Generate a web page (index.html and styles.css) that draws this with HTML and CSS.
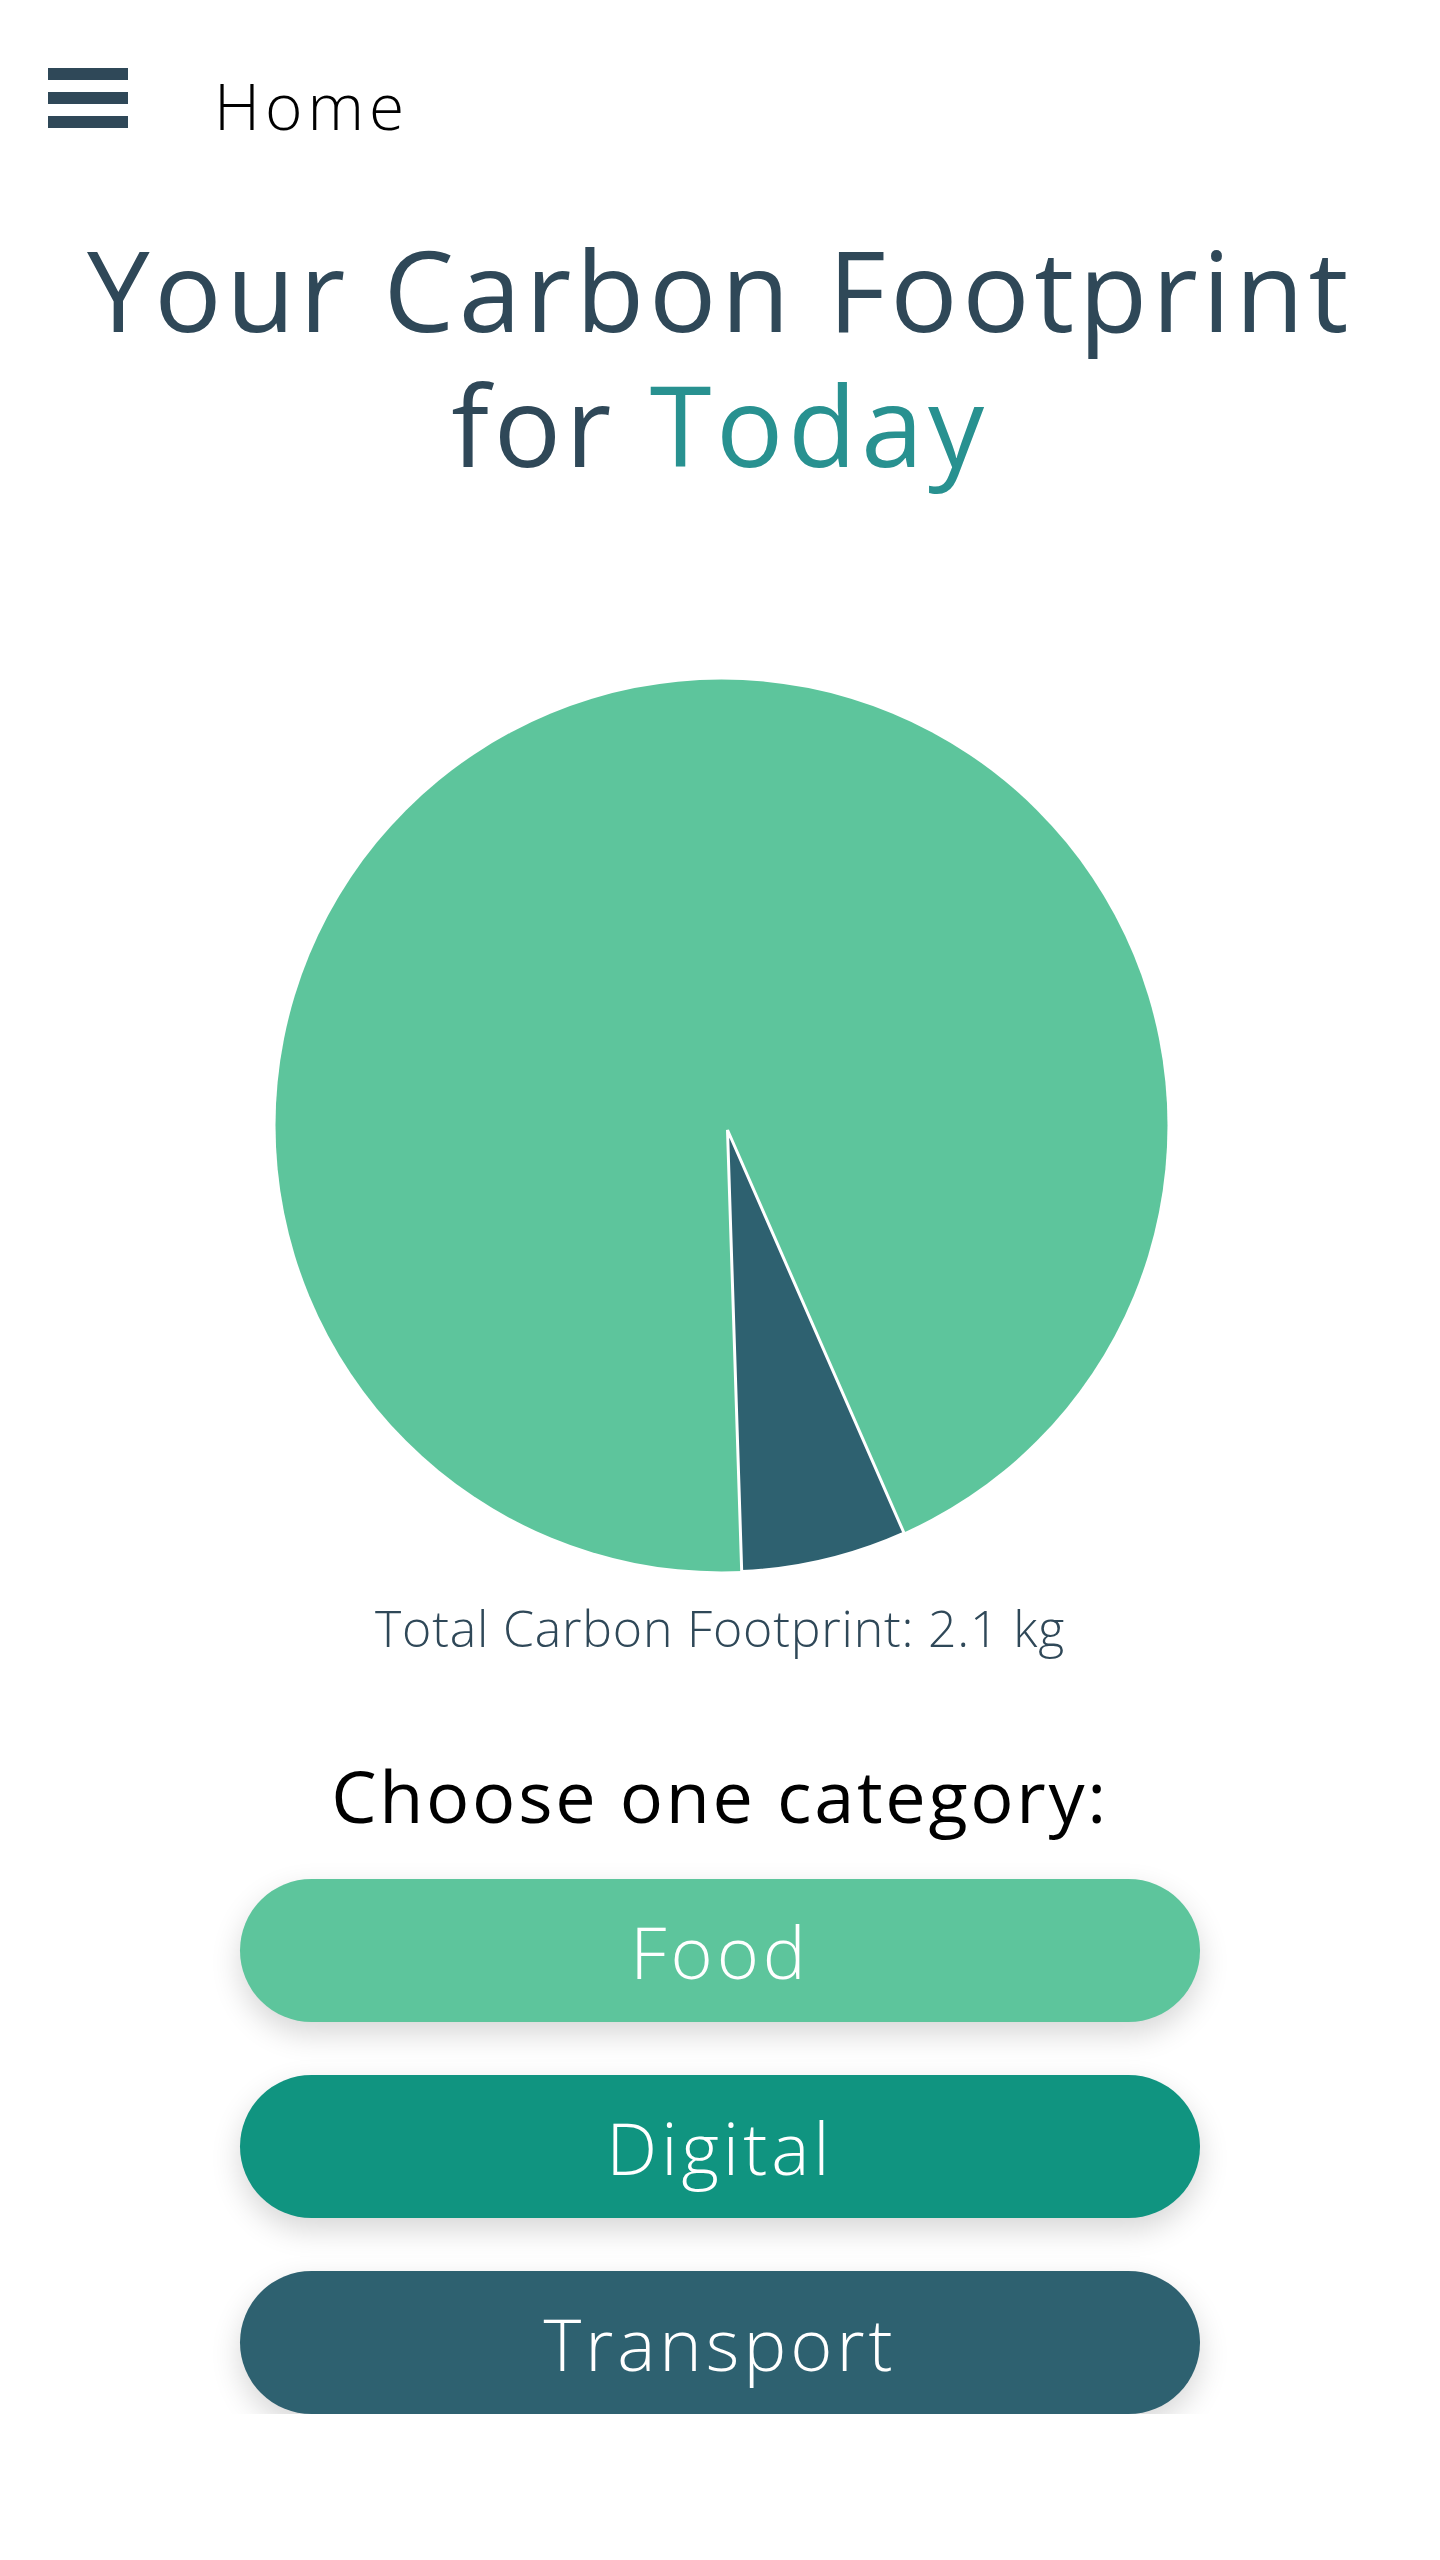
FILE: index.html
```html
<!DOCTYPE html>
<html lang="en">
<head>
<meta charset="utf-8">
<title>Home</title>
<link rel="stylesheet" href="styles.css">
</head>
<body>
<header class="topbar">
  <div class="burger" aria-label="Menu">
    <span class="bar"></span>
    <span class="bar"></span>
    <span class="bar"></span>
  </div>
  <div class="page-name">Home</div>
</header>
<main class="content">
  <h1 class="title">Your Carbon Footprint<br>for <span class="accent">Today</span></h1>
  <svg class="pie" width="900" height="900" viewBox="0 0 900 900">
    <circle cx="451.5" cy="449.5" r="446" fill="#5dc59c"/>
    <path d="M457.5 454 L471.7 895.5 A446 446 0 0 0 634 857 Z" fill="#2e6170" stroke="#ffffff" stroke-width="3" stroke-linejoin="miter"/>
  </svg>
  <p class="total">Total Carbon Footprint: 2.1 kg</p>
  <p class="choose">Choose one category:</p>
  <div class="buttons">
    <button class="cat cat-food">Food</button>
    <button class="cat cat-digital">Digital</button>
    <button class="cat cat-transport">Transport</button>
  </div>
</main>
</body>
</html>
```
FILE: styles.css
```css
html, body {
  margin: 0;
  padding: 0;
  background: #ffffff;
}
body {
  font-family: "Open Sans", "Liberation Sans", sans-serif;
  width: 1440px;
}
.topbar {
  display: flex;
  align-items: flex-start;
  height: 221px;
}
.burger {
  display: flex;
  flex-direction: column;
  gap: 12px;
  margin: 68px 0 0 48px;
}
.bar {
  display: block;
  width: 80px;
  height: 12px;
  background: #2f4858;
}
.page-name {
  margin: 74px 0 0 86px;
  font-size: 64px;
  line-height: 64px;
  font-weight: 300;
  letter-spacing: 5px;
  color: #000000;
}
.content {
  display: flex;
  flex-direction: column;
  align-items: center;
}
.title {
  margin: 0;
  font-size: 112px;
  line-height: 135px;
  font-weight: 400;
  letter-spacing: 4.6px;
  color: #2f4858;
  text-align: center;
}
.accent {
  color: #289190;
}
.pie {
  display: block;
  margin-top: 185px;
}
.total {
  margin: 22px 0 0;
  font-size: 50px;
  line-height: 60px;
  font-weight: 300;
  letter-spacing: 0.8px;
  color: #2f4858;
}
.choose {
  margin: 92px 0 0;
  font-size: 72px;
  line-height: 90px;
  font-weight: 400;
  letter-spacing: 2.7px;
  color: #000000;
}
.buttons {
  display: flex;
  flex-direction: column;
  gap: 53px;
  margin-top: 39px;
}
.cat {
  width: 960px;
  height: 143px;
  border: none;
  border-radius: 72px;
  font-family: inherit;
  font-size: 72px;
  font-weight: 300;
  letter-spacing: 4px;
  color: #ffffff;
  box-shadow: 0 12px 30px rgba(0, 0, 0, 0.16);
  padding: 0;
}
.cat-food { background: #5dc59c; }
.cat-digital { background: #109480; }
.cat-transport { background: #2e6170; }
```
